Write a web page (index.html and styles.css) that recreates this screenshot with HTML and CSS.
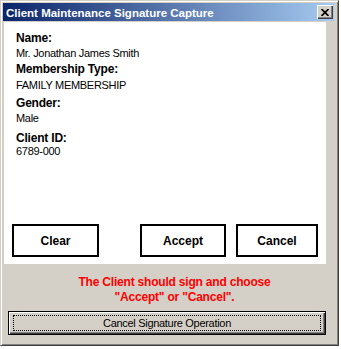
FILE: index.html
```html
<!DOCTYPE html>
<html>
  <head>
    <meta charset="UTF-8">
    <title>Client Maintenance Signature Capture</title>
    <link rel="stylesheet" href="styles.css">
  </head>
  <body>
    <div class="window">
      <div class="titlebar">
        <span class="title">Client Maintenance Signature Capture</span>
        <span class="close-btn">
          <svg width="8" height="7" viewBox="0 0 8 7"><path d="M0.5 0 L7.5 7 M7.5 0 L0.5 7" stroke="#000" stroke-width="1.7" fill="none"/></svg>
        </span>
      </div>
      <div class="client">
        <div class="panel">
          <div class="info">
            <div class="label lbl-name">Name:</div>
            <div class="value val-name">Mr. Jonathan James Smith</div>
            <div class="label lbl-type">Membership Type:</div>
            <div class="value val-type">FAMILY MEMBERSHIP</div>
            <div class="label lbl-gender">Gender:</div>
            <div class="value val-gender">Male</div>
            <div class="label lbl-id">Client ID:</div>
            <div class="value val-id">6789-000</div>
          </div>
          <div class="actions">
            <div class="flat-btn btn-clear">Clear</div>
            <div class="flat-btn btn-accept">Accept</div>
            <div class="flat-btn btn-cancel">Cancel</div>
          </div>
        </div>
        <div class="notice">The Client should sign and choose<br>"Accept" or "Cancel".</div>
        <div class="sys-btn"><span class="focus-rect">Cancel Signature Operation</span></div>
      </div>
    </div>
  </body>
</html>
```

FILE: styles.css
```css
body {
  margin:0;
  background-color:#ffffff;
  font-family:"Liberation Sans", Arial, sans-serif;
}
.window {
  box-sizing:border-box;
  width:339px;
  height:346px;
  padding:2px;
  background-color:#d4d0c8;
  border:1px solid;
  border-color:#d4d0c8 #404040 #404040 #d4d0c8;
  box-shadow:inset 1px 1px #ffffff, inset -1px -1px #808080;
  display:flex;
  flex-direction:column;
}
.titlebar {
  height:18px;
  margin-right:2px;
  display:flex;
  align-items:center;
  justify-content:space-between;
  background:linear-gradient(to right, #0a246a, #a6caf0);
}
.title {
  color:#ffffff;
  font-size:11.5px;
  font-weight:bold;
  padding:2px 0 0 3px;
}
.close-btn {
  box-sizing:border-box;
  width:16px;
  height:14px;
  margin-right:1px;
  display:flex;
  align-items:center;
  justify-content:center;
  background-color:#d4d0c8;
  box-shadow:inset 1px 1px #ffffff, inset -1px -1px #404040, inset -2px -2px #808080;
}
.client {
  flex:1;
  display:flex;
  flex-direction:column;
}
.panel {
  box-sizing:border-box;
  width:322px;
  height:242px;
  margin:1px 0 0 1px;
  padding:9px 0 7px 12px;
  background-color:#ffffff;
  display:flex;
  flex-direction:column;
}
.label {
  font-size:12px;
  font-weight:bold;
  line-height:14px;
  letter-spacing:-0.2px;
}
.value {
  font-size:11px;
  line-height:13px;
  letter-spacing:-0.3px;
}
.val-name { margin-top:2px; }
.lbl-type { margin-top:2px; }
.val-type { margin-top:3px; }
.lbl-gender { margin-top:4px; }
.val-gender { margin-top:2px; }
.lbl-id { margin-top:6px; }
.val-id { margin-top:0px; }
.actions {
  margin-top:auto;
  margin-left:-4px;
  display:flex;
}
.flat-btn {
  box-sizing:border-box;
  height:33px;
  border:2px solid #000000;
  display:flex;
  align-items:center;
  justify-content:center;
  font-size:12px;
  font-weight:bold;
}
.btn-clear { width:87px; }
.btn-accept { width:86px; margin-left:41px; }
.btn-cancel { width:82px; margin-left:10px; }
.notice {
  margin-top:11px;
  padding-left:10px;
  text-align:center;
  color:#ff0000;
  font-size:12px;
  font-weight:bold;
  line-height:15px;
  letter-spacing:-0.2px;
}
.sys-btn {
  box-sizing:border-box;
  width:318px;
  height:24px;
  margin:6px 0 0 5px;
  padding:3px 4px;
  border:1px solid #000000;
  background-color:#d4d0c8;
  box-shadow:inset 1px 1px #ffffff, inset -1px -1px #404040, inset -2px -2px #808080;
  display:flex;
}
.focus-rect {
  flex:1;
  border:1px dotted #000000;
  display:flex;
  align-items:center;
  justify-content:center;
  font-size:11px;
  letter-spacing:-0.3px;
}
```
